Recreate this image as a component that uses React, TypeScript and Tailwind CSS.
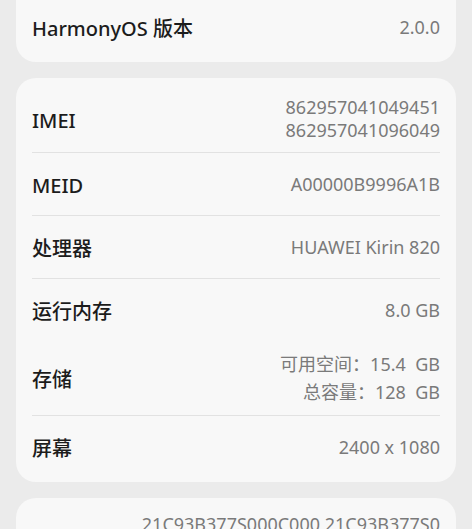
import React from "react";

type Row = {
  label: string;
  values: string[];
  lineClass?: string;
  padClass?: string;
  divider?: boolean;
};

const rows: Row[] = [
  { label: "IMEI", values: ["862957041049451", "862957041096049"], lineClass: "leading-[23px]", divider: true },
  { label: "MEID", values: ["A00000B9996A1B"], divider: true },
  { label: "处理器", values: ["HUAWEI Kirin 820"], divider: true },
  { label: "运行内存", values: ["8.0 GB"] },
  {
    label: "存储",
    values: ["可用空间：15.4\u00a0\u00a0GB", "总容量：128\u00a0\u00a0GB"],
    lineClass: "leading-[28px]",
    padClass: "py-[9px]",
    divider: true,
  },
  { label: "屏幕", values: ["2400 x 1080"] },
];

function InfoRow({ label, values, lineClass = "leading-[26px]", padClass = "py-[10px]" }: Row) {
  return (
    <div className={`flex min-h-[62px] items-center justify-between ${padClass}`}>
      <span className="pt-[3px] text-[20px] font-medium text-[#1c1c1c]">{label}</span>
      <div className={`text-right text-[18px] text-[#7a7a7a] ${lineClass}`}>
        {values.map((v) => (
          <div key={v}>{v}</div>
        ))}
      </div>
    </div>
  );
}

export default function App() {
  return (
    <div
      className="h-[529px] overflow-hidden bg-[#ebebeb] px-4"
      style={{ fontFamily: '"Noto Sans", "Noto Sans CJK SC", sans-serif' }}
    >
      <div className="flex flex-col gap-4">
        <div className="-mt-5 rounded-[20px] bg-[#f8f8f8] px-4 pt-4 pb-1">
          <InfoRow label="HarmonyOS 版本" values={["2.0.0"]} />
        </div>

        <div className="rounded-[20px] bg-[#f8f8f8] px-4 pt-2 pb-1">
          {rows.map((row) => (
            <div key={row.label}>
              <InfoRow {...row} />
              {row.divider ? <div className="h-px bg-[#e2e2e2]" /> : null}
            </div>
          ))}
        </div>

        <div className="rounded-[20px] bg-[#f8f8f8] px-4 pt-[15px] pb-4">
          <div className="flex items-center justify-between">
            <span className="text-[20px] font-medium text-[#1c1c1c]">序列号</span>
            <div className="text-right text-[18px] leading-[23px] text-[#7a7a7a]">
              <div>21C93B377S000C000 21C93B377S0</div>
              <div>00C000 21C93B377S000C000</div>
              <div>21C93B377S000C000</div>
            </div>
          </div>
        </div>
      </div>
    </div>
  );
}
